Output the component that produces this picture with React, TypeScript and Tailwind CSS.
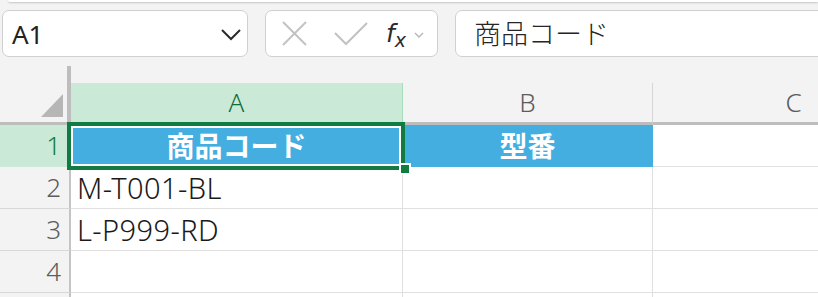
const font = "font-['Noto_Sans','Noto_Sans_CJK_JP',sans-serif]";

const rows: { n: number; cells: string[]; header?: boolean }[] = [
  { n: 1, cells: ["商品コード", "型番", ""], header: true },
  { n: 2, cells: ["M-T001-BL", "", ""] },
  { n: 3, cells: ["L-P999-RD", "", ""] },
  { n: 4, cells: ["", "", ""] },
  { n: 5, cells: ["", "", ""] },
];

function FormulaBar() {
  return (
    <div className="mt-[8px] flex h-[47px]">
      {/* Name box */}
      <div className="ml-[2px] flex w-[246px] items-center justify-between rounded-[7px] border-[1.5px] border-[#d0d0d0] bg-white pl-[9px] pr-[5px]">
        <span className="text-[26px] leading-none text-[#222]">A1</span>
        <svg width="22" height="14" viewBox="0 0 22 14" className="mt-[2px]">
          <polyline points="2,2 11,11 20,2" fill="none" stroke="#2b2b2b" strokeWidth="2" />
        </svg>
      </div>

      {/* Cancel / enter / fx */}
      <div className="ml-[17px] flex w-[173px] items-center rounded-[7px] border-[1.5px] border-[#d0d0d0] bg-white pl-[15px]">
        <svg width="27" height="25" viewBox="0 0 27 25">
          <line x1="2" y1="1" x2="25" y2="24" stroke="#c2c2c2" strokeWidth="2" />
          <line x1="25" y1="1" x2="2" y2="24" stroke="#c2c2c2" strokeWidth="2" />
        </svg>
        <svg width="34" height="24" viewBox="0 0 34 24" className="ml-[26px]">
          <polyline points="1,11 12,22 33,1" fill="none" stroke="#c2c2c2" strokeWidth="2" />
        </svg>
        <span className="ml-[18px] flex items-end leading-none text-[#2b2b2b]">
          <span className="font-['DejaVu_Sans',sans-serif] text-[25px] italic">f</span>
          <span className="mb-[-4px] font-['DejaVu_Sans',sans-serif] text-[19px] italic">x</span>
        </span>
        <svg width="10" height="6" viewBox="0 0 10 6" className="ml-[8px] mt-[2px]">
          <polyline points="1,1 5,5 9,1" fill="none" stroke="#b5b5b5" strokeWidth="1.3" />
        </svg>
      </div>

      {/* Formula input */}
      <div className="-mr-[20px] ml-[17px] flex flex-1 items-center rounded-[7px] border-[1.5px] border-[#d0d0d0] bg-white pl-[18px]">
        <span className="text-[27px] font-light leading-none text-[#262626]">商品コード</span>
      </div>
    </div>
  );
}

function Sheet() {
  return (
    <div className="relative mt-[9px]">
      <div className="grid grid-cols-[71px_332px_250px_282px]">
        {/* corner */}
        <div className="flex h-[59px] items-end justify-end border-b-[3px] border-r-[4px] border-[#bdbdbd] pb-[5px] pr-[4px]">
          <svg width="22" height="23" viewBox="0 0 22 23">
            <polygon points="22,0 22,23 0,23" fill="#b6b6b6" />
          </svg>
        </div>
        {/* column headers */}
        {["A", "B", "C"].map((c, i) => (
          <div key={c} className="flex h-[59px] flex-col">
            <div className="h-[22px]" />
            <div
              className={
                i === 0
                  ? "flex flex-1 items-center justify-center border-b-[3px] border-r border-b-[#bdbdbd] border-r-[#a6dbbb] bg-[#cae9d7] text-[26px] font-light text-[#0f6e3a]"
                  : "flex flex-1 items-center justify-center border-b-[3px] border-r border-b-[#bdbdbd] border-r-[#d6d6d6] text-[26px] font-light text-[#5c5c5c]"
              }
            >
              {c}
            </div>
          </div>
        ))}

        {rows.map((r) => (
          <div key={r.n} className="contents">
            <div
              className={
                r.n === 1
                  ? "flex h-[42px] items-center justify-end border-b border-r-[2px] border-b-[#cae9d7] border-r-[#c4c4c4] bg-[#cae9d7] pr-[8px] text-[26px] font-light text-[#107c41]"
                  : "flex h-[42px] items-center justify-end border-b border-r-[2px] border-b-[#d8d8d8] border-r-[#c4c4c4] pr-[8px] text-[26px] font-light text-[#5c5c5c]"
              }
            >
              {r.n < 5 ? r.n : ""}
            </div>
            {r.cells.map((v, i) => {
              const blue = r.header && i < 2;
              return (
                <div
                  key={i}
                  className={
                    blue
                      ? "flex h-[42px] items-center justify-center border-b border-r border-[#44aee1] bg-[#44aee1] text-[28px] font-semibold text-white"
                      : "flex h-[42px] items-center border-b border-r border-[#e0e0e0] bg-white pl-[6px] text-[29px] font-light tracking-[0.4px] text-[#1a1a1a]"
                  }
                >
                  {v}
                </div>
              );
            })}
          </div>
        ))}
      </div>

      {/* active cell A1 */}
      <div className="absolute left-[67px] top-[56px] h-[48px] w-[338px] border-[4px] border-[#107c41] shadow-[inset_0_0_0_2px_white]">
        <div className="absolute left-[328px] top-[37px] h-[12px] w-[12px] border-[2px] border-white bg-[#107c41]" />
      </div>
    </div>
  );
}

export default function App() {
  return (
    <div className={`h-[297px] w-[818px] overflow-hidden bg-[#f3f3f3] ${font}`}>
      <div className="ml-[8px] h-[2px] rounded-bl-[8px] bg-white shadow-[0_1px_2px_rgba(0,0,0,0.2)]" />
      <FormulaBar />
      <Sheet />
    </div>
  );
}
